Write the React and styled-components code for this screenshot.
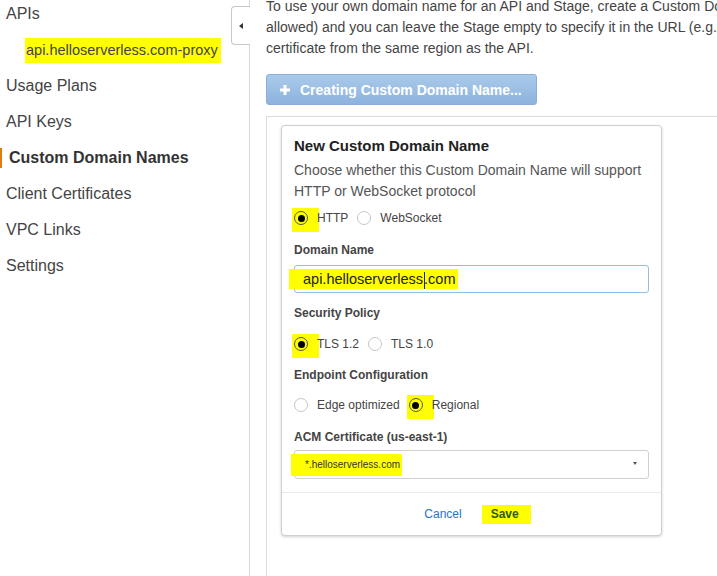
import React from 'react'
import styled, { createGlobalStyle } from 'styled-components'

const GlobalStyle = createGlobalStyle`
  html, body {
    margin: 0;
    padding: 0;
    height: 100%;
    overflow: hidden;
    background: #fff;
  }
  body {
    font-family: "Liberation Sans", Arial, sans-serif;
  }
`

const Page = styled.div`
  display: flex;
  height: 576px;
  overflow: hidden;
`

const Sidebar = styled.nav`
  position: relative;
  flex: none;
  width: 249px;
  border-right: 1px solid #d5d9d9;
`

const CollapseTab = styled.div`
  position: absolute;
  top: 6px;
  right: -1px;
  width: 19px;
  height: 39px;
  box-sizing: border-box;
  border: 1px solid #c8c8c8;
  border-right: 0;
  border-radius: 4px 0 0 4px;
  background: #fff;
  display: flex;
  align-items: center;
  justify-content: center;

  &::after {
    content: '';
    border-style: solid;
    border-width: 3.5px 4px 3.5px 0;
    border-color: transparent #333 transparent transparent;
  }
`

const NavList = styled.ul`
  list-style: none;
  margin: -4px 0 0;
  padding: 0;
`

const NavItem = styled.li`
  position: relative;
  height: 36px;
  line-height: 36px;
  font-size: ${p => (p.$sub ? '14.5px' : '16px')};
  font-weight: ${p => (p.$active ? 'bold' : 'normal')};
  color: ${p => (p.$active ? '#333' : '#444')};
  padding-left: ${p => (p.$sub ? 26 : p.$active ? 9 : 6)}px;
  white-space: nowrap;

  &::before {
    content: '';
    display: ${p => (p.$active ? 'block' : 'none')};
    position: absolute;
    left: 0;
    top: 8px;
    width: 2px;
    height: 20px;
    background: #e47911;
  }
`

const Highlight = styled.span`
  background: #ffff00;
  padding: 4px 3px 5px 1px;
  margin-left: -1px;
`

const Main = styled.main`
  flex: 1;
  min-width: 0;
  padding-left: 16px;
  overflow: hidden;
`

const Intro = styled.p`
  margin: -4px 0 0;
  font-size: 14px;
  line-height: 21px;
  color: #444;
  white-space: nowrap;
`

const CreateButton = styled.button`
  display: inline-flex;
  align-items: center;
  gap: 10px;
  margin-top: 15px;
  height: 31px;
  padding: 0 14px 0 13px;
  border: 1px solid #8aafd8;
  border-radius: 3px;
  background: linear-gradient(#aacaea, #8cb3dd);
  color: #fff;
  font: bold 14px "Liberation Sans", Arial, sans-serif;
  cursor: default;
`

const Panel = styled.section`
  margin-top: 11px;
  border-top: 1px solid #dcdcdc;
  border-left: 1px solid #dcdcdc;
  padding: 8px 0 200px 14px;
`

const Card = styled.div`
  width: 381px;
  box-sizing: border-box;
  border: 1px solid #cfcfcf;
  border-radius: 4px;
  background: #fff;
  box-shadow: 0 1px 3px rgba(0, 0, 0, 0.18);
`

const CardBody = styled.div`
  padding: 10px 12px 13px;
`

const Title = styled.h3`
  margin: 0;
  font-size: 15px;
  line-height: 20px;
  font-weight: bold;
  color: #222;
`

const Description = styled.p`
  margin: 4px 0 0;
  font-size: 14px;
  line-height: 21px;
  color: #555;
`

const RadioRow = styled.div`
  display: flex;
  align-items: center;
  height: 20px;
  margin-top: ${p => p.$top}px;
`

const RadioItem = styled.label`
  position: relative;
  z-index: 0;
  display: inline-flex;
  align-items: center;
  gap: 9px;
  margin-right: 9px;
  font-size: 12px;
  color: #444;

  &::before {
    content: '';
    display: ${p => (p.$marked ? 'block' : 'none')};
    position: absolute;
    z-index: -1;
    left: -2px;
    top: -3px;
    width: 27px;
    height: 24px;
    background: #ffff00;
  }
`

const RadioCircle = styled.span`
  flex: none;
  width: 14px;
  height: 14px;
  box-sizing: border-box;
  border-radius: 50%;
  border: 1px solid ${p => (p.$checked ? '#555' : '#c6c6c6')};
  background: ${p => (p.$checked ? 'transparent' : '#fff')};
  display: flex;
  align-items: center;
  justify-content: center;

  &::after {
    content: '';
    display: ${p => (p.$checked ? 'block' : 'none')};
    width: 7px;
    height: 7px;
    border-radius: 50%;
    background: #000;
  }
`

const FieldLabel = styled.div`
  margin-top: ${p => p.$top}px;
  font-size: 12px;
  line-height: 16px;
  font-weight: bold;
  color: #444;
`

const TextField = styled.div`
  margin-top: 7px;
  height: 28px;
  box-sizing: border-box;
  border: 1px solid #93bfe6;
  border-radius: 3px;
  padding: 0 8px;
  display: flex;
  align-items: center;
  font-size: 14.5px;
  color: #222;
`

const SelectField = styled.div`
  margin-top: 5px;
  height: 29px;
  box-sizing: border-box;
  border: 1px solid #cfcfcf;
  border-radius: 3px;
  padding: 0 11px 0 10px;
  display: flex;
  align-items: center;
  justify-content: space-between;
  font-size: 10px;
  color: #333;

  &::after {
    content: '';
    border-style: solid;
    border-width: 3px 2.5px 0 2.5px;
    border-color: #555 transparent transparent transparent;
    margin-top: -3px;
  }
`

const Marker = styled.span`
  background: #ffff00;
  line-height: ${p => p.$h}px;
  margin-left: -14px;
  padding: 0 2px 0 14px;
`

const Caret = styled.span`
  display: inline-block;
  width: 1px;
  height: 17px;
  background: #222;
  vertical-align: middle;
  margin: 0 -1px 0 1px;
`

const CardFooter = styled.div`
  height: 42px;
  border-top: 1px solid #e8ebeb;
  display: flex;
  align-items: center;
  justify-content: center;
  gap: 29px;
`

const LinkButton = styled.span`
  font-size: 12px;
  font-weight: ${p => (p.$primary ? 'bold' : 'normal')};
  color: ${p => (p.$primary ? '#2f5a0c' : '#2874c5')};
  background: ${p => (p.$primary ? '#ffff00' : 'transparent')};
  line-height: 19px;
  padding: ${p => (p.$primary ? '0 12px 0 9px' : '0')};
  margin: ${p => (p.$primary ? '0 -12px 0 -9px' : '0')};
`

const Radio = ({ label, checked, marked }) => (
  <RadioItem $marked={marked}>
    <RadioCircle $checked={checked} />
    {label}
  </RadioItem>
)

const navItems = [
  { label: 'APIs' },
  { label: 'api.helloserverless.com-proxy', sub: true },
  { label: 'Usage Plans' },
  { label: 'API Keys' },
  { label: 'Custom Domain Names', active: true },
  { label: 'Client Certificates' },
  { label: 'VPC Links' },
  { label: 'Settings' },
]

export default function App() {
  return (
    <Page>
      <GlobalStyle />
      <Sidebar>
        <NavList>
          {navItems.map(item => (
            <NavItem key={item.label} $sub={item.sub} $active={item.active}>
              {item.sub ? <Highlight>{item.label}</Highlight> : item.label}
            </NavItem>
          ))}
        </NavList>
        <CollapseTab />
      </Sidebar>
      <Main>
        <Intro>
          To use your own domain name for an API and Stage, create a Custom Domain Name and a base path mapping (multiple mappings are
          <br />
          allowed) and you can leave the Stage empty to specify it in the URL (e.g. https://api.example.com/stage). You will need an ACM
          <br />
          certificate from the same region as the API.
        </Intro>
        <CreateButton>
          <svg width="10" height="10" viewBox="0 0 10 10">
            <rect x="3.5" y="0" width="3" height="10" fill="#fff" />
            <rect x="0" y="3.5" width="10" height="3" fill="#fff" />
          </svg>
          Creating Custom Domain Name...
        </CreateButton>
        <Panel>
          <Card>
            <CardBody>
              <Title>New Custom Domain Name</Title>
              <Description>
                Choose whether this Custom Domain Name will support HTTP or WebSocket protocol
              </Description>
              <RadioRow $top={6}>
                <Radio label="HTTP" checked marked />
                <Radio label="WebSocket" />
              </RadioRow>

              <FieldLabel $top={14}>Domain Name</FieldLabel>
              <TextField>
                <Marker $h={20}>
                  api.helloserverless<Caret />.com
                </Marker>
              </TextField>

              <FieldLabel $top={12}>Security Policy</FieldLabel>
              <RadioRow $top={13}>
                <Radio label="TLS 1.2" checked marked />
                <Radio label="TLS 1.0" />
              </RadioRow>

              <FieldLabel $top={13}>Endpoint Configuration</FieldLabel>
              <RadioRow $top={12}>
                <Radio label="Edge optimized" />
                <Radio label="Regional" checked marked />
              </RadioRow>

              <FieldLabel $top={14}>ACM Certificate (us-east-1)</FieldLabel>
              <SelectField>
                <Marker $h={22}>*.helloserverless.com</Marker>
              </SelectField>
            </CardBody>
            <CardFooter>
              <LinkButton>Cancel</LinkButton>
              <LinkButton $primary>Save</LinkButton>
            </CardFooter>
          </Card>
        </Panel>
      </Main>
    </Page>
  )
}
